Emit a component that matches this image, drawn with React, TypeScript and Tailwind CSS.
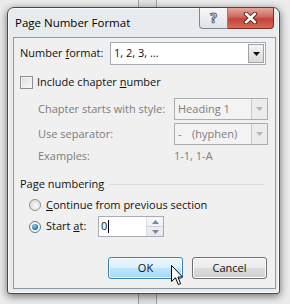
import React from "react";

function DisabledCombo({ children }: { children: React.ReactNode }) {
  return (
    <div className="w-[94px] h-[22px] flex border border-[#adadad] bg-[#f3f3f3]">
      <div className="flex-1 flex items-center pl-[3px] text-[#7d7d7d]">{children}</div>
      <div className="w-[16px] border-l border-[#c8c8c8] bg-[#ececec] flex items-center justify-center">
        <svg width="7" height="4" viewBox="0 0 7 4">
          <path d="M0 0h7L3.5 4z" fill="#b4b4b4" />
        </svg>
      </div>
    </div>
  );
}

export default function App() {
  return (
    <div className="w-[290px] h-[304px] overflow-hidden relative pt-[7px] pl-[7px] bg-[linear-gradient(90deg,#ececec_138px,#a2a2a2_138px,#a2a2a2_139px,#e3e3e3_139px,#e3e3e3_156px,#a2a2a2_156px,#a2a2a2_157px,#ececec_157px)] font-['Open_Sans',sans-serif] text-[11px] text-[#111]">
      {/* Window */}
      <div className="w-[273px] h-[287px] flex flex-col rounded-t-[7px] rounded-b-[3px] border border-[#45494e] bg-[#e8ebee] shadow-[0_2px_8px_rgba(0,0,0,0.55),inset_0_0_0_1px_#fafbfc] pl-[5px] pr-[3px] pb-[4px]">
        {/* Title bar */}
        <div className="h-[29px] flex items-start">
          <span className="self-center ml-[2px] text-[11.5px] text-black">Page Number Format</span>
          <div className="ml-auto mr-[2px] flex">
            <div className="w-[29px] h-[21px] rounded-bl-[4px] border border-[#7d8792] border-t-0 bg-[linear-gradient(#f6f7f8,#dfe3e8)] flex items-center justify-center">
              <span className="text-[14px] font-bold leading-none text-[#f4f4f4] [-webkit-text-stroke:1px_#5c6670]">?</span>
            </div>
            <div className="w-[46px] h-[21px] rounded-br-[4px] border border-l-0 border-t-0 border-[#7b2b22] bg-[linear-gradient(#e6a79b,#d0665a_45%,#c2433a_55%,#d86b55)] flex items-center justify-center">
              <svg width="15" height="12" viewBox="0 0 15 12">
                <path d="M3 1.8l9 8.4M12 1.8l-9 8.4" stroke="#5a1d17" strokeWidth="4.4" strokeLinecap="round" />
                <path d="M3 1.8l9 8.4M12 1.8l-9 8.4" stroke="#ffffff" strokeWidth="2.6" strokeLinecap="round" />
              </svg>
            </div>
          </div>
        </div>

        {/* Client area */}
        <div className="flex-1 flex flex-col border border-[#8e99a4] bg-[#f0f0f0] pl-[6px] pr-[7px] pt-[4px]">
          {/* Number format */}
          <div className="h-[23px] flex items-center">
            <span className="w-[90px]">
              Number <span className="underline">f</span>ormat:
            </span>
            <div className="w-[156px] h-[23px] flex border border-[#a3a9b0] bg-white">
              <div className="flex-1 flex items-center pl-[3px]">1, 2, 3, …</div>
              <div className="w-[16px] my-[1px] mr-[1px] border border-[#9ea3a8] bg-[linear-gradient(#f4f4f4,#dadada)] flex items-center justify-center">
                <svg width="7" height="4" viewBox="0 0 7 4">
                  <path d="M0 0h7L3.5 4z" fill="#111" />
                </svg>
              </div>
            </div>
          </div>

          {/* Include chapter number */}
          <div className="mt-[9px] h-[16px] flex items-center gap-[4px]">
            <div className="w-[13px] h-[13px] border border-[#8f8f8f] bg-[linear-gradient(135deg,#dcdcdc,#fbfbfb)] shadow-[inset_0_0_0_1px_#f4f4f4]" />
            <span>
              Include chapter <span className="underline">n</span>umber
            </span>
          </div>

          {/* Chapter style */}
          <div className="mt-[8px] ml-[18px] flex items-center text-[#7d7d7d]">
            <span className="w-[136px]">Chapter starts with style:</span>
            <DisabledCombo>Heading 1</DisabledCombo>
          </div>
          <div className="mt-[3px] ml-[18px] flex items-center text-[#7d7d7d]">
            <span className="w-[136px]">Use separator:</span>
            <DisabledCombo>
              <span className="w-[14px]">-</span>(hyphen)
            </DisabledCombo>
          </div>
          <div className="mt-[3px] ml-[18px] h-[16px] flex items-center text-[#7d7d7d]">
            <span className="w-[136px]">Examples:</span>
            <span>1-1, 1-A</span>
          </div>

          {/* Page numbering */}
          <div className="mt-[12px] h-[16px] flex items-center">
            <span>Page numbering</span>
            <div className="flex-1 ml-[5px] mr-[4px] h-px bg-[#d5dde3]" />
          </div>

          <div className="mt-[5px] ml-[9px] h-[16px] flex items-center gap-[5px]">
            <div className="w-[12px] h-[12px] rounded-full border border-[#8e8f8f] bg-[radial-gradient(circle_at_60%_60%,#f8f8f8,#d4d4d4)]" />
            <span>
              <span className="underline">C</span>ontinue from previous section
            </span>
          </div>

          <div className="mt-[3px] ml-[9px] h-[21px] flex items-center">
            <div className="w-[12px] h-[12px] rounded-full border border-[#5b7a93] bg-[#f4f7f9] flex items-center justify-center">
              <div className="w-[6px] h-[6px] rounded-full bg-[radial-gradient(circle_at_40%_35%,#8fd1ee,#1a6d9a_70%,#0f4d73)]" />
            </div>
            <span className="ml-[5px] w-[52px]">
              Start <span className="underline">a</span>t:
            </span>
            <div className="w-[66px] h-[21px] flex border border-[#abadb3] bg-white">
              <div className="flex-1 flex items-center pl-[2px]">
                0<span className="ml-px w-px h-[13px] bg-black" />
              </div>
              <div className="w-[17px] flex flex-col border-l border-[#d9dde2] bg-[linear-gradient(#f7f8fa,#e4e8ed)]">
                <div className="flex-1 flex items-center justify-center border-b border-[#cfd4da]">
                  <svg width="7" height="4" viewBox="0 0 7 4">
                    <path d="M0 4h7L3.5 0z" fill="#7b8894" />
                  </svg>
                </div>
                <div className="flex-1 flex items-center justify-center">
                  <svg width="7" height="4" viewBox="0 0 7 4">
                    <path d="M0 0h7L3.5 4z" fill="#7b8894" />
                  </svg>
                </div>
              </div>
            </div>
          </div>

          {/* Buttons */}
          <div className="mt-[20px] mr-[1px] flex justify-end gap-[9px]">
            <div className="w-[75px] h-[22px] rounded-[3px] border border-[#3c7fb1] bg-[linear-gradient(#eaf6fd,#d9f0fc_50%,#bee6fd_51%,#a7d9f5)] shadow-[inset_0_0_0_1px_#f4fbff] flex items-center justify-center">
              OK
            </div>
            <div className="w-[75px] h-[22px] rounded-[3px] border border-[#707070] bg-[linear-gradient(#f2f2f2,#ebebeb_50%,#dddddd_51%,#cfcfcf)] shadow-[inset_0_0_0_1px_#fbfbfb] flex items-center justify-center">
              Cancel
            </div>
          </div>
        </div>
      </div>

      {/* Mouse pointer */}
      <svg className="absolute left-[171px] top-[265px]" width="13" height="22" viewBox="0 0 13 22">
        <path d="M0.5 0.5V16.5L4.5 12.8L7.3 19.6L9.6 18.6L6.9 12H11.6Z" fill="#fff" stroke="#000" strokeWidth="1" strokeLinejoin="round" />
      </svg>
    </div>
  );
}
